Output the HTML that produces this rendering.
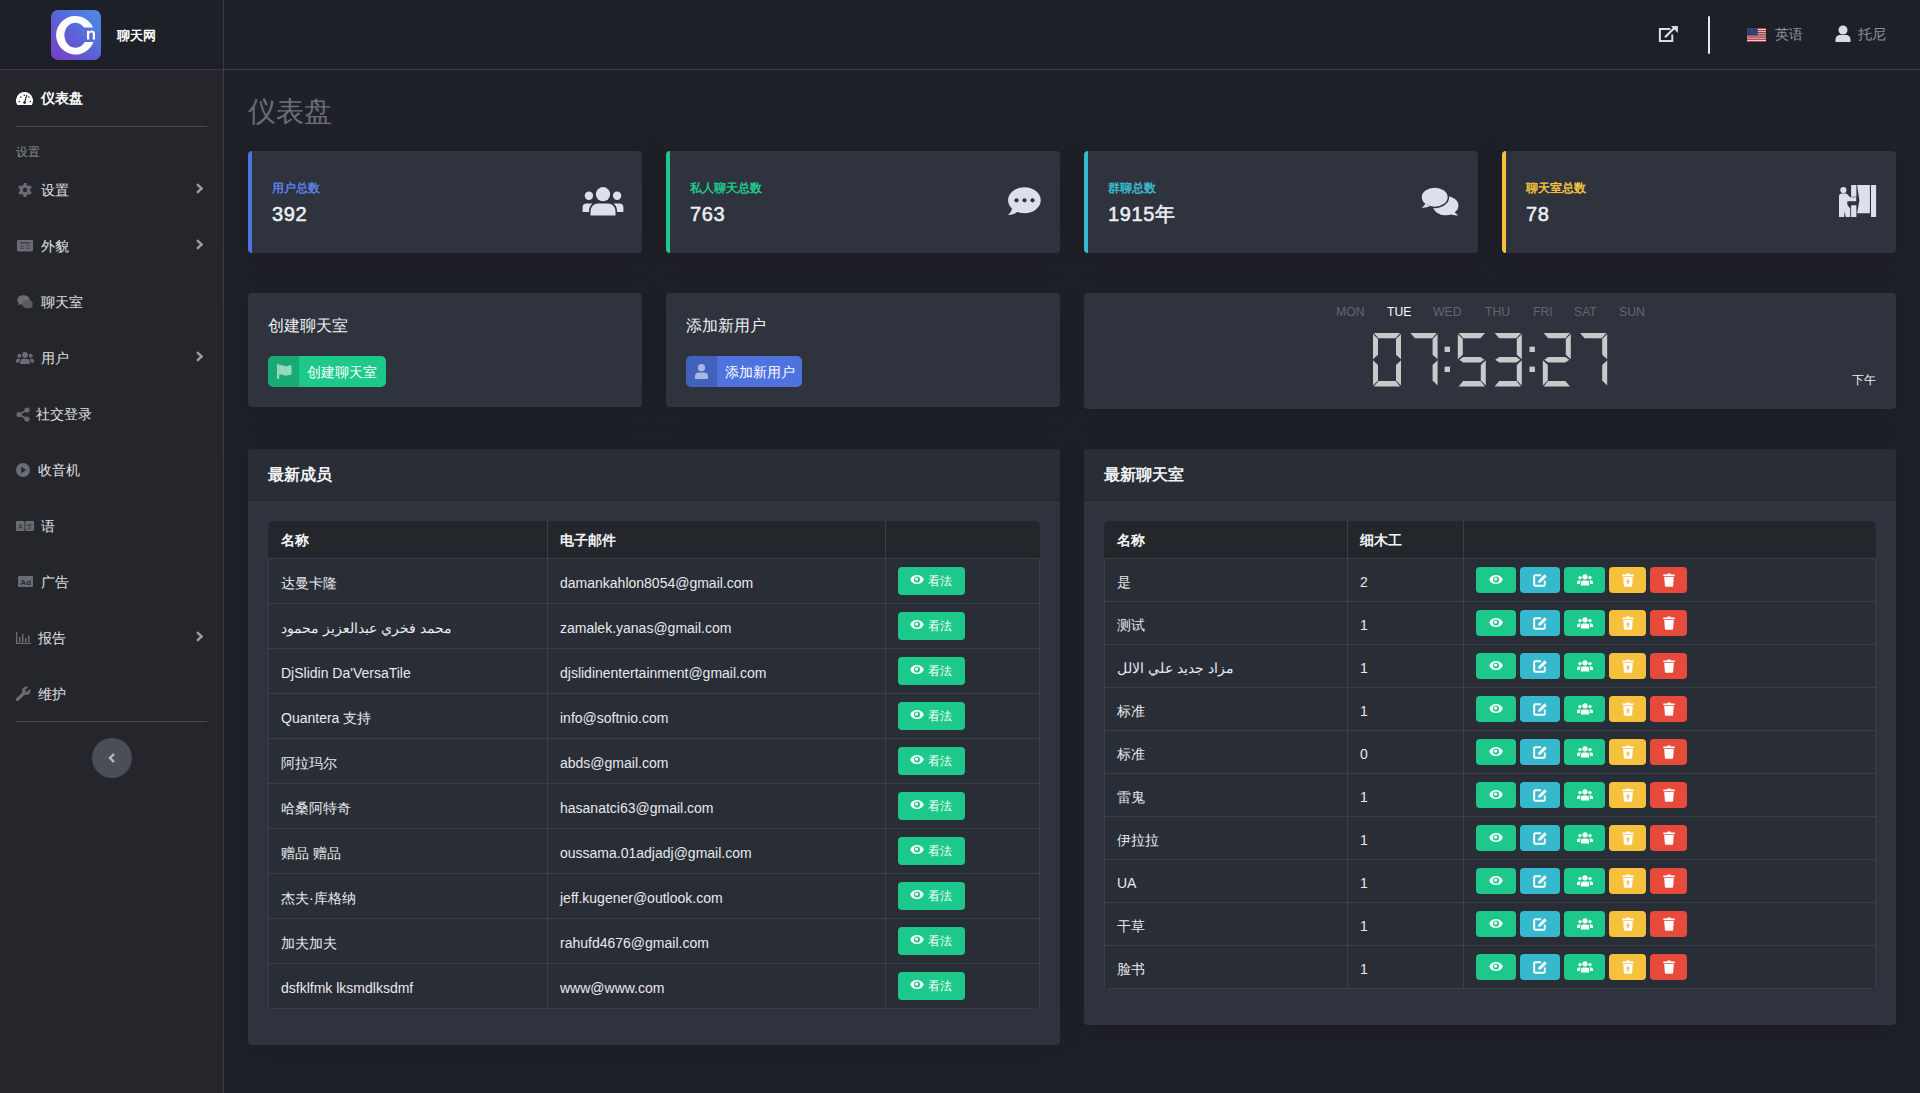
<!DOCTYPE html><html><head><meta charset="utf-8"><style>
*{box-sizing:border-box;margin:0;padding:0}
html,body{width:1920px;height:1093px;overflow:hidden}
body{background:#1f2128;font-family:"Liberation Sans",sans-serif;color:#e3e3e6;position:relative}
.abs{position:absolute}
#topbar{position:absolute;left:0;top:0;width:1920px;height:70px;background:#1e2028;border-bottom:1px solid #3b3b43}
#sidebar{position:absolute;left:0;top:70px;width:224px;height:1023px;background:#24262b;border-right:1px solid #3b3b43}
#sbtop{position:absolute;left:223px;top:0;width:1px;height:70px;background:#3b3b43}
.logo{position:absolute;left:51px;top:10px;width:50px;height:50px;border-radius:7px;background:linear-gradient(45deg,#7b3cc2 0%,#5a64d8 50%,#4a8ee8 100%);overflow:hidden}
.brand{position:absolute;left:117px;top:27.5px;font-size:12.6px;font-weight:bold;color:#fff;line-height:16px}
.nav{position:absolute;left:0;height:20px;line-height:20px;font-size:14px;color:#e2e2e4;white-space:nowrap}
.nav svg{position:absolute}
.nav .t{position:absolute;top:0}
.chev{position:absolute;left:195px}
.divider{position:absolute;left:16px;width:191px;height:1px;background:#474a52}
.card{position:absolute;background:#2e333d;border-radius:4px;box-shadow:0 .15rem 1.75rem 0 rgba(0,0,0,.15)}
.stat{height:102px;top:151px;width:394px;border-left:4px solid}
.stat .lbl{position:absolute;left:20px;top:30px;font-size:12px;font-weight:bold;line-height:14px;white-space:nowrap}
.stat .num{position:absolute;left:20px;top:51px;font-size:20px;letter-spacing:0.6px;font-weight:normal;-webkit-text-stroke:0.55px #eceef3;color:#eceef3;line-height:24px;white-space:nowrap}
.stat svg{position:absolute}
.h16{position:absolute;font-size:16px;color:#eef0f3;line-height:20px;white-space:nowrap;margin-top:1px}
.btnsplit{position:absolute;height:31px;border-radius:5px;overflow:hidden;display:flex;font-size:14px;color:#fff;line-height:31px;white-space:nowrap}
.btnsplit .ic{width:31px;height:31px;background:rgba(0,0,0,.15);position:relative}
.btnsplit .tx{padding-left:8px;position:relative;top:1px}
.panel{position:absolute;background:#2e333d;border-radius:4px;box-shadow:0 .15rem 1.75rem 0 rgba(0,0,0,.15);overflow:hidden}
.phead{position:absolute;left:0;top:0;right:0;height:52px;background:#292d35;border-bottom:1px solid #23262c}
.phead .t{position:absolute;left:20px;top:16px;font-size:16px;font-weight:bold;color:#f2f2f4;line-height:20px}
table{position:absolute;border-collapse:separate;border-spacing:0;font-size:14px;color:#e6e7ea}
.tbl{position:absolute;background:#292d36;border:1px solid #3a3d44;border-radius:5px;overflow:hidden}
.tr{position:absolute;left:0;right:0;border-bottom:1px solid #3a3d44}
.thead{background:#23262b}
.cell{position:absolute;top:0;white-space:nowrap}
.vl{position:absolute;top:0;bottom:0;width:1px;background:#3a3d44}
.vbtn{position:absolute;height:28px;width:67px;border-radius:4px;background:#1cc88a;color:#fff;font-size:12px;line-height:28px}
.ab{position:absolute;height:26px;border-radius:4px}
</style></head><body>
<div id="topbar"></div>
<div id="sidebar"></div>
<div id="sbtop"></div>
<div class="logo"><svg width="50" height="50" viewBox="0 0 50 50" style="position:absolute;left:0;top:0">
<path d="M42.1 17.5 A19.3 19.3 0 1 0 42.5 31.9 L33.69 31.9 A11 12.5 0 1 1 33.06 17.5 Z" fill="#fff"/>
<path d="M36 29.4 V20.8 H38.2 V21.8 C39 20.9 40 20.6 41 20.6 C43 20.6 44 21.8 44 23.8 V29.4 H41.8 V24.2 C41.8 23 41.3 22.4 40.3 22.4 C39 22.4 38.2 23.2 38.2 24.6 V29.4 Z" fill="#fff"/>
</svg></div>
<div class="brand">聊天网</div>
<svg class="abs" style="left:1657px;top:24px" width="23" height="20" viewBox="0 0 23 20">
<path d="M13.3 4.9 H2.9 V17.1 H15.3 V10.4" fill="none" stroke="#dcdde6" stroke-width="2"/>
<path d="M8 13.3 L17.8 3.5" stroke="#dcdde6" stroke-width="2.3"/>
<path d="M14 2 H20.9 V8.9 Z" fill="#dcdde6"/>
</svg>
<div class="abs" style="left:1708px;top:16px;width:2px;height:38px;background:#e6e6ec;border-radius:1px"></div>
<svg class="abs" style="left:1747px;top:28px" width="19" height="14" viewBox="0 0 19 14"><rect x="0" y="0.00" width="19" height="1.08" fill="#c8323c"/><rect x="0" y="1.08" width="19" height="1.08" fill="#eee"/><rect x="0" y="2.15" width="19" height="1.08" fill="#c8323c"/><rect x="0" y="3.23" width="19" height="1.08" fill="#eee"/><rect x="0" y="4.31" width="19" height="1.08" fill="#c8323c"/><rect x="0" y="5.38" width="19" height="1.08" fill="#eee"/><rect x="0" y="6.46" width="19" height="1.08" fill="#c8323c"/><rect x="0" y="7.54" width="19" height="1.08" fill="#eee"/><rect x="0" y="8.62" width="19" height="1.08" fill="#c8323c"/><rect x="0" y="9.69" width="19" height="1.08" fill="#eee"/><rect x="0" y="10.77" width="19" height="1.08" fill="#c8323c"/><rect x="0" y="11.85" width="19" height="1.08" fill="#eee"/><rect x="0" y="12.92" width="19" height="1.08" fill="#c8323c"/><rect x="0" y="14.00" width="19" height="1.08" fill="#eee"/><rect x="0" y="0" width="10.8" height="7.5" fill="#3b3c72"/></svg>
<div class="abs" style="left:1775px;top:26px;font-size:14px;line-height:17px;color:#8d909b">英语</div>
<svg class="abs" style="left:1835px;top:25px" width="16" height="17" viewBox="0 0 16 17">
<circle cx="8" cy="5" r="4.5" fill="#d9dbe6"/>
<path d="M0.5 17 V14.5 A4.5 4.5 0 0 1 5 10 H11 A4.5 4.5 0 0 1 15.5 14.5 V17 Z" fill="#d9dbe6"/>
</svg>
<div class="abs" style="left:1858px;top:26px;font-size:14px;line-height:17px;color:#8d909b">托尼</div>
<div class="nav" style="top:88px;width:223px"><svg style="left:16px;top:4px" width="17" height="14" viewBox="0 0 17 14">
<path d="M1.3 13 A8.5 8.5 0 1 1 15.7 13 Z" fill="#fff"/>
<circle cx="3.3" cy="9.5" r="0.8" fill="#23262c"/><circle cx="4.8" cy="5" r="0.8" fill="#23262c"/><circle cx="12.8" cy="5" r="0.8" fill="#23262c"/><circle cx="14.3" cy="9.5" r="0.8" fill="#23262c"/><circle cx="8.25" cy="3.3" r="0.8" fill="#23262c"/>
<path d="M8.6 10.3 L10.8 3" stroke="#23262c" stroke-width="1.1"/><circle cx="8.6" cy="10.6" r="1.4" fill="#23262c"/>
</svg><span class="t" style="left:41px;color:#ffffff;font-weight:bold">仪表盘</span></div>
<div class="divider" style="top:126px"></div>
<div class="abs" style="left:16px;top:145px;font-size:12px;line-height:14px;color:#8a8b90">设置</div>
<div class="nav" style="top:180px;width:223px"><svg style="left:18px;top:3px" width="14" height="14" viewBox="0 0 14 14">
<g fill="#6a6c73"><circle cx="7" cy="7" r="5.2"/>
<rect x="5.4" y="0" width="3.2" height="14" rx="0.8"/>
<rect x="5.4" y="0" width="3.2" height="14" rx="0.8" transform="rotate(60 7 7)"/>
<rect x="5.4" y="0" width="3.2" height="14" rx="0.8" transform="rotate(120 7 7)"/></g>
<circle cx="7" cy="7" r="2.2" fill="#23262c"/></svg><span class="t" style="left:41px;color:#e0e0e3;font-weight:normal">设置</span><svg class="chev" style="top:3px" width="9" height="11" viewBox="0 0 9 11"><path d="M2 1.2 L6.6 5.5 L2 9.8" fill="none" stroke="#9b9da4" stroke-width="2.4"/></svg></div>
<div class="nav" style="top:236px;width:223px"><svg style="left:17px;top:4px" width="16" height="12" viewBox="0 0 16 12">
<rect x="0" y="0" width="16" height="11.5" rx="1.2" fill="#6a6c73"/>
<rect x="3" y="2.2" width="10" height="1.4" fill="#3a3c42"/>
<rect x="3" y="5.4" width="4.2" height="1.1" fill="#4a4c52"/><rect x="8.8" y="5.4" width="4.2" height="1.1" fill="#4a4c52"/>
<rect x="3" y="7.8" width="4.2" height="1.1" fill="#4a4c52"/><rect x="8.8" y="7.8" width="4.2" height="1.1" fill="#4a4c52"/>
</svg><span class="t" style="left:41px;color:#e0e0e3;font-weight:normal">外貌</span><svg class="chev" style="top:3px" width="9" height="11" viewBox="0 0 9 11"><path d="M2 1.2 L6.6 5.5 L2 9.8" fill="none" stroke="#9b9da4" stroke-width="2.4"/></svg></div>
<div class="nav" style="top:292px;width:223px"><svg style="left:17px;top:3px" width="16" height="14" viewBox="0 0 16 14">
<ellipse cx="6.5" cy="5" rx="6.3" ry="4.8" fill="#6a6c73"/><path d="M0.5 10.5 L2.5 7 L4 8.8 Z" fill="#6a6c73"/>
<ellipse cx="10.5" cy="9" rx="5.3" ry="4.3" fill="#5a5c62"/><path d="M15.8 13.5 L13.5 11 L12 12.6 Z" fill="#5a5c62"/>
</svg><span class="t" style="left:41px;color:#e0e0e3;font-weight:normal">聊天室</span></div>
<div class="nav" style="top:348px;width:223px"><svg style="left:16px;top:4px" width="18" height="12" viewBox="0 0 18 12">
<g fill="#6a6c73"><circle cx="9" cy="3" r="3"/><circle cx="3.3" cy="3.8" r="2"/><circle cx="14.7" cy="3.8" r="2"/>
<path d="M4.2 12 V10 A3.3 3.3 0 0 1 7.5 6.8 H10.5 A3.3 3.3 0 0 1 13.8 10 V12 Z"/>
<path d="M0 10.5 V8.8 A2 2 0 0 1 2 6.8 H4.5 A4 4 0 0 0 3.4 9 V10.5 Z"/>
<path d="M18 10.5 V8.8 A2 2 0 0 0 16 6.8 H13.5 A4 4 0 0 1 14.6 9 V10.5 Z"/></g></svg><span class="t" style="left:41px;color:#e0e0e3;font-weight:normal">用户</span><svg class="chev" style="top:3px" width="9" height="11" viewBox="0 0 9 11"><path d="M2 1.2 L6.6 5.5 L2 9.8" fill="none" stroke="#9b9da4" stroke-width="2.4"/></svg></div>
<div class="nav" style="top:404px;width:223px"><svg style="left:16px;top:3px" width="14" height="15" viewBox="0 0 14 15">
<g fill="#6a6c73"><circle cx="11" cy="3" r="2.6"/><circle cx="3" cy="7.5" r="2.6"/><circle cx="11" cy="12" r="2.6"/></g>
<path d="M11 3 L3 7.5 L11 12" fill="none" stroke="#6a6c73" stroke-width="1.6"/></svg><span class="t" style="left:36px;color:#e0e0e3;font-weight:normal">社交登录</span></div>
<div class="nav" style="top:460px;width:223px"><svg style="left:16px;top:3px" width="14" height="14" viewBox="0 0 14 14">
<circle cx="7" cy="7" r="7" fill="#6a6c73"/><path d="M5.2 3.8 L10 7 L5.2 10.2 Z" fill="#23262c"/></svg><span class="t" style="left:38px;color:#e0e0e3;font-weight:normal">收音机</span></div>
<div class="nav" style="top:516px;width:223px"><svg style="left:16px;top:5px" width="18" height="10" viewBox="0 0 18 10">
<rect x="0" y="0" width="8.6" height="10" rx="0.8" fill="#6a6c73"/><rect x="9.4" y="0" width="8.6" height="10" rx="0.8" fill="#6a6c73"/>
<text x="4.3" y="8" font-size="7" text-anchor="middle" fill="#2a2c31" font-family="Liberation Sans">A</text>
<text x="13.7" y="8" font-size="7" text-anchor="middle" fill="#2a2c31" font-family="Liberation Sans">文</text></svg><span class="t" style="left:41px;color:#e0e0e3;font-weight:normal">语</span></div>
<div class="nav" style="top:572px;width:223px"><svg style="left:18px;top:4px" width="15" height="11" viewBox="0 0 15 11">
<rect x="0" y="0" width="15" height="11" rx="1" fill="#6a6c73"/>
<text x="7.5" y="8.5" font-size="8" font-weight="bold" text-anchor="middle" fill="#2a2c31" font-family="Liberation Sans">Ad</text></svg><span class="t" style="left:41px;color:#e0e0e3;font-weight:normal">广告</span></div>
<div class="nav" style="top:628px;width:223px"><svg style="left:16px;top:4px" width="15" height="12" viewBox="0 0 15 12">
<g fill="#6a6c73"><rect x="0" y="0" width="1.3" height="12"/><rect x="0" y="10.7" width="15" height="1.3"/>
<rect x="3" y="5" width="1.5" height="5"/><rect x="6" y="2" width="1.5" height="8"/><rect x="9" y="6" width="1.5" height="4"/><rect x="12" y="3.5" width="1.5" height="6.5"/></g></svg><span class="t" style="left:38px;color:#e0e0e3;font-weight:normal">报告</span><svg class="chev" style="top:3px" width="9" height="11" viewBox="0 0 9 11"><path d="M2 1.2 L6.6 5.5 L2 9.8" fill="none" stroke="#9b9da4" stroke-width="2.4"/></svg></div>
<div class="nav" style="top:684px;width:223px"><svg style="left:16px;top:2px" width="15" height="15" viewBox="0 0 15 15">
<path d="M1.5 13.5 L8 7" stroke="#6a6c73" stroke-width="3.2" stroke-linecap="round"/>
<circle cx="10.3" cy="4.7" r="4.3" fill="#6a6c73"/><path d="M10.5 4.5 L13 2" stroke="#23262c" stroke-width="2.6" stroke-linecap="round"/></svg><span class="t" style="left:38px;color:#e0e0e3;font-weight:normal">维护</span></div>
<div class="divider" style="top:721px"></div>
<div class="abs" style="left:92px;top:738px;width:40px;height:40px;border-radius:50%;background:#4b4e55">
<svg class="abs" style="left:16px;top:15px" width="8" height="10" viewBox="0 0 8 10"><path d="M6 1 L2 5 L6 9" fill="none" stroke="#b9bbc2" stroke-width="2.4"/></svg></div>
<div class="abs" style="left:248px;top:95px;font-size:28px;line-height:34px;color:#6d6c77">仪表盘</div>
<div class="card stat" style="left:248px;border-left-color:#4e73df"><div class="lbl" style="color:#5b7fe5">用户总数</div><div class="num">392</div><svg style="left:329.5px;top:36px" width="42" height="30" viewBox="0 0 42 30">
<g fill="#dddfeb"><circle cx="21" cy="7.2" r="7.1"/><circle cx="6.9" cy="8.7" r="4.2"/><circle cx="35.1" cy="8.7" r="4.2"/>
<path d="M8.5 28.6 V24 A7.5 7.5 0 0 1 16 16.5 H26 A7.5 7.5 0 0 1 33.5 24 V28.6 Z"/>
<path d="M0.6 25 V20.5 A4 4 0 0 1 4.6 16.5 H10.5 A9.5 9.5 0 0 0 7 23.5 V25 Z"/>
<path d="M41.4 25 V20.5 A4 4 0 0 0 37.4 16.5 H31.5 A9.5 9.5 0 0 1 35 23.5 V25 Z"/></g></svg></div>
<div class="card stat" style="left:666px;border-left-color:#1cc88a"><div class="lbl" style="color:#1ec98c">私人聊天总数</div><div class="num">763</div><svg style="left:337.5px;top:35.7px" width="34" height="30" viewBox="0 0 34 30">
<ellipse cx="16.4" cy="13.2" rx="16.3" ry="13" fill="#dddfeb"/>
<path d="M4.2 20.5 C3.8 24 2 26.3 0 28 C3.5 28 6.8 27 9.5 24.8 Z" fill="#dddfeb"/>
<circle cx="8.5" cy="13.3" r="2.1" fill="#2e333d"/><circle cx="16.5" cy="13.3" r="2.1" fill="#2e333d"/><circle cx="24.5" cy="13.3" r="2.1" fill="#2e333d"/></svg></div>
<div class="card stat" style="left:1084px;border-left-color:#36b9cc"><div class="lbl" style="color:#39bccd">群聊总数</div><div class="num">1915年</div><svg style="left:333px;top:35.5px" width="40" height="30" viewBox="0 0 40 30">
<ellipse cx="24.6" cy="18.6" rx="12.8" ry="9.6" fill="#dddfeb"/>
<path d="M33 24 C34 26 35.5 27.4 37.5 28.3 C34 28.6 31 28 28.5 26.5 Z" fill="#dddfeb"/>
<ellipse cx="13.7" cy="10.2" rx="13.7" ry="10.2" fill="#dddfeb" stroke="#2e333d" stroke-width="1.5"/>
<path d="M4.2 16.5 C3.6 18.6 2 20 0.2 20.6 C3.5 21 6.5 20.3 8.8 19 Z" fill="#dddfeb"/>
</svg></div>
<div class="card stat" style="left:1502px;border-left-color:#f6c23e"><div class="lbl" style="color:#f6c23e">聊天室总数</div><div class="num">78</div><svg style="left:333.4px;top:33.8px" width="38" height="33" viewBox="0 0 38 33">
<g fill="#dddfeb"><circle cx="4.4" cy="5.1" r="3.1"/>
<rect x="12.1" y="0" width="5.3" height="11.7" rx="0.5"/><rect x="12.1" y="20.2" width="5.3" height="11.9" rx="0.5"/>
<path d="M18.1 0 L20.4 15.6 L18.1 28.2 H30.9 V0 Z"/>
<rect x="32" y="0" width="5.1" height="32.1" rx="0.5"/>
<path d="M0 32.1 V11.6 A3 3 0 0 1 3 8.6 H7.5 L11.2 12.2 H17.2 V16.3 H8.3 V19.8 L11.2 23.5 V32.1 H6.8 L5.6 26.5 L5.2 32.1 Z"/></g></svg></div>
<div class="card" style="left:248px;top:293px;width:394px;height:114px"></div>
<div class="h16" style="left:268px;top:315px">创建聊天室</div>
<div class="btnsplit" style="left:268px;top:356px;width:118px;background:#1cc88a"><div class="ic">
<svg class="abs" style="left:9px;top:8px" width="15" height="15" viewBox="0 0 15 15"><rect x="0" y="0" width="2.2" height="15" rx="1" fill="rgba(255,255,255,.55)"/><path d="M2.2 1.5 C5 0 7.5 3 10 2 C11.5 1.5 13 1 14.5 1.2 V11 C13 10.6 11.5 11 10 11.6 C7.5 12.6 5 9.5 2.2 11 Z" fill="rgba(255,255,255,.55)"/></svg>
</div><div class="tx">创建聊天室</div></div>
<div class="card" style="left:666px;top:293px;width:394px;height:114px"></div>
<div class="h16" style="left:686px;top:315px">添加新用户</div>
<div class="btnsplit" style="left:686px;top:356px;width:116px;background:#4e73df"><div class="ic">
<svg class="abs" style="left:9px;top:8px" width="13" height="15" viewBox="0 0 13 15"><circle cx="6.5" cy="3.7" r="3.6" fill="rgba(255,255,255,.55)"/><path d="M0 15 V12.5 A4 4 0 0 1 4 8.5 H9 A4 4 0 0 1 13 12.5 V15 Z" fill="rgba(255,255,255,.55)"/></svg>
</div><div class="tx">添加新用户</div></div>
<div class="card" style="left:1084px;top:293px;width:812px;height:116px"></div>
<div class="abs" style="left:1336px;top:305px;font-size:12.2px;line-height:14px;color:#62666f">MON</div>
<div class="abs" style="left:1387px;top:305px;font-size:12.2px;line-height:14px;color:#ffffff">TUE</div>
<div class="abs" style="left:1433px;top:305px;font-size:12.2px;line-height:14px;color:#62666f">WED</div>
<div class="abs" style="left:1485px;top:305px;font-size:12.2px;line-height:14px;color:#62666f">THU</div>
<div class="abs" style="left:1533px;top:305px;font-size:12.2px;line-height:14px;color:#62666f">FRI</div>
<div class="abs" style="left:1574px;top:305px;font-size:12.2px;line-height:14px;color:#62666f">SAT</div>
<div class="abs" style="left:1619px;top:305px;font-size:12.2px;line-height:14px;color:#62666f">SUN</div>
<div class="abs" style="left:1852px;top:373px;font-size:12px;line-height:14px;color:#f0f0f0">下午</div>
<svg class="abs" style="left:1370px;top:330px" width="245" height="60" viewBox="0 0 245 60"><g fill="#c9c9c9" transform="translate(0,2.9)"><g transform="translate(3.00,0)"><polygon points="0.8,0 27.2,0 22.6,5.4 5.4,5.4"/><polygon points="28,1.2 28,26.4 23.0,21.8 23.0,6.2"/><polygon points="28,27.4 28,52.6 23.0,47.6 23.0,32.2"/><polygon points="0.8,53.6 27.2,53.6 22.6,48.2 5.4,48.2"/><polygon points="0,27.4 0,52.6 5.0,47.6 5.0,32.2"/><polygon points="0,1.2 0,26.4 5.0,21.8 5.0,6.2"/></g><g transform="translate(39.60,0)"><polygon points="0.8,0 27.2,0 22.6,5.4 5.4,5.4"/><polygon points="28,1.2 28,26.4 23.0,21.8 23.0,6.2"/><polygon points="28,27.4 28,52.6 23.0,47.6 23.0,32.2"/></g><g transform="translate(87.80,0)"><polygon points="0.8,0 27.2,0 22.6,5.4 5.4,5.4"/><polygon points="0,1.2 0,26.4 5.0,21.8 5.0,6.2"/><polygon points="1.5,26.9 5.4,24.2 22.6,24.2 26.5,26.9 22.6,29.6 5.4,29.6"/><polygon points="28,27.4 28,52.6 23.0,47.6 23.0,32.2"/><polygon points="0.8,53.6 27.2,53.6 22.6,48.2 5.4,48.2"/></g><g transform="translate(123.80,0)"><polygon points="0.8,0 27.2,0 22.6,5.4 5.4,5.4"/><polygon points="28,1.2 28,26.4 23.0,21.8 23.0,6.2"/><polygon points="1.5,26.9 5.4,24.2 22.6,24.2 26.5,26.9 22.6,29.6 5.4,29.6"/><polygon points="28,27.4 28,52.6 23.0,47.6 23.0,32.2"/><polygon points="0.8,53.6 27.2,53.6 22.6,48.2 5.4,48.2"/></g><g transform="translate(172.80,0)"><polygon points="0.8,0 27.2,0 22.6,5.4 5.4,5.4"/><polygon points="28,1.2 28,26.4 23.0,21.8 23.0,6.2"/><polygon points="1.5,26.9 5.4,24.2 22.6,24.2 26.5,26.9 22.6,29.6 5.4,29.6"/><polygon points="0,27.4 0,52.6 5.0,47.6 5.0,32.2"/><polygon points="0.8,53.6 27.2,53.6 22.6,48.2 5.4,48.2"/></g><g transform="translate(209.20,0)"><polygon points="0.8,0 27.2,0 22.6,5.4 5.4,5.4"/><polygon points="28,1.2 28,26.4 23.0,21.8 23.0,6.2"/><polygon points="28,27.4 28,52.6 23.0,47.6 23.0,32.2"/></g><rect x="74.60" y="13.8" width="5.4" height="5.3"/><rect x="74.60" y="33.7" width="5.4" height="5.4"/><rect x="159.50" y="13.8" width="5.4" height="5.3"/><rect x="159.50" y="33.7" width="5.4" height="5.4"/></g></svg>
<div class="panel" style="left:248px;top:449px;width:812px;height:596px"><div class="phead"><div class="t">最新成员</div></div></div>
<div class="panel" style="left:1084px;top:449px;width:812px;height:576px"><div class="phead"><div class="t">最新聊天室</div></div></div>
<div class="abs" style="left:268px;top:521px;width:772px;height:488px"><div class="abs" style="left:0;top:0;width:772px;height:37px;background:#23262b;border-radius:5px 5px 0 0"></div><div class="abs" style="left:0;top:37px;width:772px;height:451px;background:#292d36;border-left:1px solid #3b3e45;border-right:1px solid #3b3e45;border-radius:0 0 4px 4px"></div><div class="abs" style="left:0px;top:37px;width:772px;height:1px;background:#3b3e45"></div><div class="abs" style="left:0px;top:82px;width:772px;height:1px;background:#3b3e45"></div><div class="abs" style="left:0px;top:127px;width:772px;height:1px;background:#3b3e45"></div><div class="abs" style="left:0px;top:172px;width:772px;height:1px;background:#3b3e45"></div><div class="abs" style="left:0px;top:217px;width:772px;height:1px;background:#3b3e45"></div><div class="abs" style="left:0px;top:262px;width:772px;height:1px;background:#3b3e45"></div><div class="abs" style="left:0px;top:307px;width:772px;height:1px;background:#3b3e45"></div><div class="abs" style="left:0px;top:352px;width:772px;height:1px;background:#3b3e45"></div><div class="abs" style="left:0px;top:397px;width:772px;height:1px;background:#3b3e45"></div><div class="abs" style="left:0px;top:442px;width:772px;height:1px;background:#3b3e45"></div><div class="abs" style="left:4px;top:487px;width:764px;height:1px;background:#3b3e45"></div><div class="abs" style="left:279px;top:0;width:1px;height:488px;background:#3b3e45"></div><div class="abs" style="left:617px;top:0;width:1px;height:488px;background:#3b3e45"></div><div class="abs" style="left:13px;top:11px;font-size:14px;font-weight:bold;line-height:16px;color:#f4f4f6;white-space:nowrap">名称</div><div class="abs" style="left:292px;top:11px;font-size:14px;font-weight:bold;line-height:16px;color:#f4f4f6;white-space:nowrap">电子邮件</div><div class="abs" style="left:13px;top:54px;font-size:14px;line-height:16px;color:#e8e9ec;white-space:nowrap">达曼卡隆</div><div class="abs" style="left:292px;top:54px;font-size:14px;line-height:16px;color:#e8e9ec;white-space:nowrap">damankahlon8054@gmail.com</div><div class="vbtn" style="left:630px;top:46px"><svg class="abs" style="left:12px;top:7px" width="14" height="11" viewBox="0 0 14 11"><path d="M0.2 5.5 C2.2 -0.6 11.8 -0.6 13.8 5.5 C11.8 11.6 2.2 11.6 0.2 5.5 Z" fill="#fff"/><circle cx="7" cy="5.5" r="3.1" fill="#1cc88a"/><circle cx="6.6" cy="5.1" r="1.7" fill="#fff"/></svg><span class="abs" style="left:30px;top:7px;line-height:14px">看法</span></div><div class="abs" style="left:13px;top:99px;font-size:14px;line-height:16px;color:#e8e9ec;white-space:nowrap">محمد فخري عبدالعزيز محمود</div><div class="abs" style="left:292px;top:99px;font-size:14px;line-height:16px;color:#e8e9ec;white-space:nowrap">zamalek.yanas@gmail.com</div><div class="vbtn" style="left:630px;top:91px"><svg class="abs" style="left:12px;top:7px" width="14" height="11" viewBox="0 0 14 11"><path d="M0.2 5.5 C2.2 -0.6 11.8 -0.6 13.8 5.5 C11.8 11.6 2.2 11.6 0.2 5.5 Z" fill="#fff"/><circle cx="7" cy="5.5" r="3.1" fill="#1cc88a"/><circle cx="6.6" cy="5.1" r="1.7" fill="#fff"/></svg><span class="abs" style="left:30px;top:7px;line-height:14px">看法</span></div><div class="abs" style="left:13px;top:144px;font-size:14px;line-height:16px;color:#e8e9ec;white-space:nowrap">DjSlidin Da'VersaTile</div><div class="abs" style="left:292px;top:144px;font-size:14px;line-height:16px;color:#e8e9ec;white-space:nowrap">djslidinentertainment@gmail.com</div><div class="vbtn" style="left:630px;top:136px"><svg class="abs" style="left:12px;top:7px" width="14" height="11" viewBox="0 0 14 11"><path d="M0.2 5.5 C2.2 -0.6 11.8 -0.6 13.8 5.5 C11.8 11.6 2.2 11.6 0.2 5.5 Z" fill="#fff"/><circle cx="7" cy="5.5" r="3.1" fill="#1cc88a"/><circle cx="6.6" cy="5.1" r="1.7" fill="#fff"/></svg><span class="abs" style="left:30px;top:7px;line-height:14px">看法</span></div><div class="abs" style="left:13px;top:189px;font-size:14px;line-height:16px;color:#e8e9ec;white-space:nowrap">Quantera 支持</div><div class="abs" style="left:292px;top:189px;font-size:14px;line-height:16px;color:#e8e9ec;white-space:nowrap">info@softnio.com</div><div class="vbtn" style="left:630px;top:181px"><svg class="abs" style="left:12px;top:7px" width="14" height="11" viewBox="0 0 14 11"><path d="M0.2 5.5 C2.2 -0.6 11.8 -0.6 13.8 5.5 C11.8 11.6 2.2 11.6 0.2 5.5 Z" fill="#fff"/><circle cx="7" cy="5.5" r="3.1" fill="#1cc88a"/><circle cx="6.6" cy="5.1" r="1.7" fill="#fff"/></svg><span class="abs" style="left:30px;top:7px;line-height:14px">看法</span></div><div class="abs" style="left:13px;top:234px;font-size:14px;line-height:16px;color:#e8e9ec;white-space:nowrap">阿拉玛尔</div><div class="abs" style="left:292px;top:234px;font-size:14px;line-height:16px;color:#e8e9ec;white-space:nowrap">abds@gmail.com</div><div class="vbtn" style="left:630px;top:226px"><svg class="abs" style="left:12px;top:7px" width="14" height="11" viewBox="0 0 14 11"><path d="M0.2 5.5 C2.2 -0.6 11.8 -0.6 13.8 5.5 C11.8 11.6 2.2 11.6 0.2 5.5 Z" fill="#fff"/><circle cx="7" cy="5.5" r="3.1" fill="#1cc88a"/><circle cx="6.6" cy="5.1" r="1.7" fill="#fff"/></svg><span class="abs" style="left:30px;top:7px;line-height:14px">看法</span></div><div class="abs" style="left:13px;top:279px;font-size:14px;line-height:16px;color:#e8e9ec;white-space:nowrap">哈桑阿特奇</div><div class="abs" style="left:292px;top:279px;font-size:14px;line-height:16px;color:#e8e9ec;white-space:nowrap">hasanatci63@gmail.com</div><div class="vbtn" style="left:630px;top:271px"><svg class="abs" style="left:12px;top:7px" width="14" height="11" viewBox="0 0 14 11"><path d="M0.2 5.5 C2.2 -0.6 11.8 -0.6 13.8 5.5 C11.8 11.6 2.2 11.6 0.2 5.5 Z" fill="#fff"/><circle cx="7" cy="5.5" r="3.1" fill="#1cc88a"/><circle cx="6.6" cy="5.1" r="1.7" fill="#fff"/></svg><span class="abs" style="left:30px;top:7px;line-height:14px">看法</span></div><div class="abs" style="left:13px;top:324px;font-size:14px;line-height:16px;color:#e8e9ec;white-space:nowrap">赠品 赠品</div><div class="abs" style="left:292px;top:324px;font-size:14px;line-height:16px;color:#e8e9ec;white-space:nowrap">oussama.01adjadj@gmail.com</div><div class="vbtn" style="left:630px;top:316px"><svg class="abs" style="left:12px;top:7px" width="14" height="11" viewBox="0 0 14 11"><path d="M0.2 5.5 C2.2 -0.6 11.8 -0.6 13.8 5.5 C11.8 11.6 2.2 11.6 0.2 5.5 Z" fill="#fff"/><circle cx="7" cy="5.5" r="3.1" fill="#1cc88a"/><circle cx="6.6" cy="5.1" r="1.7" fill="#fff"/></svg><span class="abs" style="left:30px;top:7px;line-height:14px">看法</span></div><div class="abs" style="left:13px;top:369px;font-size:14px;line-height:16px;color:#e8e9ec;white-space:nowrap">杰夫·库格纳</div><div class="abs" style="left:292px;top:369px;font-size:14px;line-height:16px;color:#e8e9ec;white-space:nowrap">jeff.kugener@outlook.com</div><div class="vbtn" style="left:630px;top:361px"><svg class="abs" style="left:12px;top:7px" width="14" height="11" viewBox="0 0 14 11"><path d="M0.2 5.5 C2.2 -0.6 11.8 -0.6 13.8 5.5 C11.8 11.6 2.2 11.6 0.2 5.5 Z" fill="#fff"/><circle cx="7" cy="5.5" r="3.1" fill="#1cc88a"/><circle cx="6.6" cy="5.1" r="1.7" fill="#fff"/></svg><span class="abs" style="left:30px;top:7px;line-height:14px">看法</span></div><div class="abs" style="left:13px;top:414px;font-size:14px;line-height:16px;color:#e8e9ec;white-space:nowrap">加夫加夫</div><div class="abs" style="left:292px;top:414px;font-size:14px;line-height:16px;color:#e8e9ec;white-space:nowrap">rahufd4676@gmail.com</div><div class="vbtn" style="left:630px;top:406px"><svg class="abs" style="left:12px;top:7px" width="14" height="11" viewBox="0 0 14 11"><path d="M0.2 5.5 C2.2 -0.6 11.8 -0.6 13.8 5.5 C11.8 11.6 2.2 11.6 0.2 5.5 Z" fill="#fff"/><circle cx="7" cy="5.5" r="3.1" fill="#1cc88a"/><circle cx="6.6" cy="5.1" r="1.7" fill="#fff"/></svg><span class="abs" style="left:30px;top:7px;line-height:14px">看法</span></div><div class="abs" style="left:13px;top:459px;font-size:14px;line-height:16px;color:#e8e9ec;white-space:nowrap">dsfklfmk lksmdlksdmf</div><div class="abs" style="left:292px;top:459px;font-size:14px;line-height:16px;color:#e8e9ec;white-space:nowrap">www@www.com</div><div class="vbtn" style="left:630px;top:451px"><svg class="abs" style="left:12px;top:7px" width="14" height="11" viewBox="0 0 14 11"><path d="M0.2 5.5 C2.2 -0.6 11.8 -0.6 13.8 5.5 C11.8 11.6 2.2 11.6 0.2 5.5 Z" fill="#fff"/><circle cx="7" cy="5.5" r="3.1" fill="#1cc88a"/><circle cx="6.6" cy="5.1" r="1.7" fill="#fff"/></svg><span class="abs" style="left:30px;top:7px;line-height:14px">看法</span></div></div>
<div class="abs" style="left:1104px;top:521px;width:772px;height:468px"><div class="abs" style="left:0;top:0;width:772px;height:37px;background:#23262b;border-radius:5px 5px 0 0"></div><div class="abs" style="left:0;top:37px;width:772px;height:431px;background:#292d36;border-left:1px solid #3b3e45;border-right:1px solid #3b3e45;border-radius:0 0 4px 4px"></div><div class="abs" style="left:0px;top:37px;width:772px;height:1px;background:#3b3e45"></div><div class="abs" style="left:0px;top:80px;width:772px;height:1px;background:#3b3e45"></div><div class="abs" style="left:0px;top:123px;width:772px;height:1px;background:#3b3e45"></div><div class="abs" style="left:0px;top:166px;width:772px;height:1px;background:#3b3e45"></div><div class="abs" style="left:0px;top:209px;width:772px;height:1px;background:#3b3e45"></div><div class="abs" style="left:0px;top:252px;width:772px;height:1px;background:#3b3e45"></div><div class="abs" style="left:0px;top:295px;width:772px;height:1px;background:#3b3e45"></div><div class="abs" style="left:0px;top:338px;width:772px;height:1px;background:#3b3e45"></div><div class="abs" style="left:0px;top:381px;width:772px;height:1px;background:#3b3e45"></div><div class="abs" style="left:0px;top:424px;width:772px;height:1px;background:#3b3e45"></div><div class="abs" style="left:4px;top:467px;width:764px;height:1px;background:#3b3e45"></div><div class="abs" style="left:243px;top:0;width:1px;height:468px;background:#3b3e45"></div><div class="abs" style="left:359px;top:0;width:1px;height:468px;background:#3b3e45"></div><div class="abs" style="left:13px;top:11px;font-size:14px;font-weight:bold;line-height:16px;color:#f4f4f6;white-space:nowrap">名称</div><div class="abs" style="left:256px;top:11px;font-size:14px;font-weight:bold;line-height:16px;color:#f4f4f6;white-space:nowrap">细木工</div><div class="abs" style="left:13px;top:53px;font-size:14px;line-height:16px;color:#e8e9ec;white-space:nowrap">是</div><div class="abs" style="left:256px;top:53px;font-size:14px;line-height:16px;color:#e8e9ec;white-space:nowrap">2</div><div class="ab" style="left:372px;top:46px;width:40px;background:#1cc88a"><svg class="abs" style="left:13px;top:7px" width="14" height="11" viewBox="0 0 14 11"><path d="M0.2 5.5 C2.2 -0.6 11.8 -0.6 13.8 5.5 C11.8 11.6 2.2 11.6 0.2 5.5 Z" fill="#fff"/><circle cx="7" cy="5.5" r="3.1" fill="#1cc88a"/><circle cx="6.6" cy="5.1" r="1.7" fill="#fff"/></svg></div><div class="ab" style="left:416px;top:46px;width:40px;background:#36b9cc"><svg class="abs" style="left:13px;top:6px" width="15" height="14" viewBox="0 0 15 14">
<path d="M8 2.2 H2.2 A1 1 0 0 0 1.2 3.2 V11.8 A1 1 0 0 0 2.2 12.8 H10.8 A1 1 0 0 0 11.8 11.8 V7.5" fill="none" stroke="#fff" stroke-width="1.9"/>
<path d="M5 9.8 L5.4 7.4 L11.6 1.2 L13.8 3.4 L7.6 9.6 Z" fill="#fff"/></svg></div><div class="ab" style="left:460px;top:46px;width:41px;background:#1cc88a"><svg class="abs" style="left:13px;top:7px" width="16" height="12" viewBox="0 0 16 12">
<g fill="#fff"><circle cx="8" cy="2.8" r="2.6"/><circle cx="3" cy="3.6" r="1.7"/><circle cx="13" cy="3.6" r="1.7"/>
<path d="M3.8 11.5 V9.3 A2.8 2.8 0 0 1 6.6 6.5 H9.4 A2.8 2.8 0 0 1 12.2 9.3 V11.5 Z"/>
<path d="M0 10 V8.2 A1.8 1.8 0 0 1 1.8 6.4 H4 A3.5 3.5 0 0 0 3 8.8 V10 Z"/><path d="M16 10 V8.2 A1.8 1.8 0 0 0 14.2 6.4 H12 A3.5 3.5 0 0 1 13 8.8 V10 Z"/></g></svg></div><div class="ab" style="left:505px;top:46px;width:37px;background:#f6c23e"><svg class="abs" style="left:13px;top:6px" width="12" height="14" viewBox="0 0 12 14">
<path d="M0.3 1.6 H4 L4.6 0.4 H7.4 L8 1.6 H11.7 V3.2 H0.3 Z" fill="#fff"/><path d="M1.2 4 H10.8 L10.1 13 A1 1 0 0 1 9.1 13.8 H2.9 A1 1 0 0 1 1.9 13 Z" fill="#fff"/>
<path d="M6 6 L3.8 8.4 H5.2 V11.2 H6.8 V8.4 H8.2 Z" fill="#f6c23e"/></svg></div><div class="ab" style="left:546px;top:46px;width:37px;background:#e74a3b"><svg class="abs" style="left:13px;top:6px" width="12" height="14" viewBox="0 0 12 14">
<path d="M0.3 1.6 H4 L4.6 0.4 H7.4 L8 1.6 H11.7 V3.2 H0.3 Z" fill="#fff"/><path d="M1.2 4 H10.8 L10.1 13 A1 1 0 0 1 9.1 13.8 H2.9 A1 1 0 0 1 1.9 13 Z" fill="#fff"/></svg></div><div class="abs" style="left:13px;top:96px;font-size:14px;line-height:16px;color:#e8e9ec;white-space:nowrap">测试</div><div class="abs" style="left:256px;top:96px;font-size:14px;line-height:16px;color:#e8e9ec;white-space:nowrap">1</div><div class="ab" style="left:372px;top:89px;width:40px;background:#1cc88a"><svg class="abs" style="left:13px;top:7px" width="14" height="11" viewBox="0 0 14 11"><path d="M0.2 5.5 C2.2 -0.6 11.8 -0.6 13.8 5.5 C11.8 11.6 2.2 11.6 0.2 5.5 Z" fill="#fff"/><circle cx="7" cy="5.5" r="3.1" fill="#1cc88a"/><circle cx="6.6" cy="5.1" r="1.7" fill="#fff"/></svg></div><div class="ab" style="left:416px;top:89px;width:40px;background:#36b9cc"><svg class="abs" style="left:13px;top:6px" width="15" height="14" viewBox="0 0 15 14">
<path d="M8 2.2 H2.2 A1 1 0 0 0 1.2 3.2 V11.8 A1 1 0 0 0 2.2 12.8 H10.8 A1 1 0 0 0 11.8 11.8 V7.5" fill="none" stroke="#fff" stroke-width="1.9"/>
<path d="M5 9.8 L5.4 7.4 L11.6 1.2 L13.8 3.4 L7.6 9.6 Z" fill="#fff"/></svg></div><div class="ab" style="left:460px;top:89px;width:41px;background:#1cc88a"><svg class="abs" style="left:13px;top:7px" width="16" height="12" viewBox="0 0 16 12">
<g fill="#fff"><circle cx="8" cy="2.8" r="2.6"/><circle cx="3" cy="3.6" r="1.7"/><circle cx="13" cy="3.6" r="1.7"/>
<path d="M3.8 11.5 V9.3 A2.8 2.8 0 0 1 6.6 6.5 H9.4 A2.8 2.8 0 0 1 12.2 9.3 V11.5 Z"/>
<path d="M0 10 V8.2 A1.8 1.8 0 0 1 1.8 6.4 H4 A3.5 3.5 0 0 0 3 8.8 V10 Z"/><path d="M16 10 V8.2 A1.8 1.8 0 0 0 14.2 6.4 H12 A3.5 3.5 0 0 1 13 8.8 V10 Z"/></g></svg></div><div class="ab" style="left:505px;top:89px;width:37px;background:#f6c23e"><svg class="abs" style="left:13px;top:6px" width="12" height="14" viewBox="0 0 12 14">
<path d="M0.3 1.6 H4 L4.6 0.4 H7.4 L8 1.6 H11.7 V3.2 H0.3 Z" fill="#fff"/><path d="M1.2 4 H10.8 L10.1 13 A1 1 0 0 1 9.1 13.8 H2.9 A1 1 0 0 1 1.9 13 Z" fill="#fff"/>
<path d="M6 6 L3.8 8.4 H5.2 V11.2 H6.8 V8.4 H8.2 Z" fill="#f6c23e"/></svg></div><div class="ab" style="left:546px;top:89px;width:37px;background:#e74a3b"><svg class="abs" style="left:13px;top:6px" width="12" height="14" viewBox="0 0 12 14">
<path d="M0.3 1.6 H4 L4.6 0.4 H7.4 L8 1.6 H11.7 V3.2 H0.3 Z" fill="#fff"/><path d="M1.2 4 H10.8 L10.1 13 A1 1 0 0 1 9.1 13.8 H2.9 A1 1 0 0 1 1.9 13 Z" fill="#fff"/></svg></div><div class="abs" style="left:13px;top:139px;font-size:14px;line-height:16px;color:#e8e9ec;white-space:nowrap">مزاد جديد علي الالل</div><div class="abs" style="left:256px;top:139px;font-size:14px;line-height:16px;color:#e8e9ec;white-space:nowrap">1</div><div class="ab" style="left:372px;top:132px;width:40px;background:#1cc88a"><svg class="abs" style="left:13px;top:7px" width="14" height="11" viewBox="0 0 14 11"><path d="M0.2 5.5 C2.2 -0.6 11.8 -0.6 13.8 5.5 C11.8 11.6 2.2 11.6 0.2 5.5 Z" fill="#fff"/><circle cx="7" cy="5.5" r="3.1" fill="#1cc88a"/><circle cx="6.6" cy="5.1" r="1.7" fill="#fff"/></svg></div><div class="ab" style="left:416px;top:132px;width:40px;background:#36b9cc"><svg class="abs" style="left:13px;top:6px" width="15" height="14" viewBox="0 0 15 14">
<path d="M8 2.2 H2.2 A1 1 0 0 0 1.2 3.2 V11.8 A1 1 0 0 0 2.2 12.8 H10.8 A1 1 0 0 0 11.8 11.8 V7.5" fill="none" stroke="#fff" stroke-width="1.9"/>
<path d="M5 9.8 L5.4 7.4 L11.6 1.2 L13.8 3.4 L7.6 9.6 Z" fill="#fff"/></svg></div><div class="ab" style="left:460px;top:132px;width:41px;background:#1cc88a"><svg class="abs" style="left:13px;top:7px" width="16" height="12" viewBox="0 0 16 12">
<g fill="#fff"><circle cx="8" cy="2.8" r="2.6"/><circle cx="3" cy="3.6" r="1.7"/><circle cx="13" cy="3.6" r="1.7"/>
<path d="M3.8 11.5 V9.3 A2.8 2.8 0 0 1 6.6 6.5 H9.4 A2.8 2.8 0 0 1 12.2 9.3 V11.5 Z"/>
<path d="M0 10 V8.2 A1.8 1.8 0 0 1 1.8 6.4 H4 A3.5 3.5 0 0 0 3 8.8 V10 Z"/><path d="M16 10 V8.2 A1.8 1.8 0 0 0 14.2 6.4 H12 A3.5 3.5 0 0 1 13 8.8 V10 Z"/></g></svg></div><div class="ab" style="left:505px;top:132px;width:37px;background:#f6c23e"><svg class="abs" style="left:13px;top:6px" width="12" height="14" viewBox="0 0 12 14">
<path d="M0.3 1.6 H4 L4.6 0.4 H7.4 L8 1.6 H11.7 V3.2 H0.3 Z" fill="#fff"/><path d="M1.2 4 H10.8 L10.1 13 A1 1 0 0 1 9.1 13.8 H2.9 A1 1 0 0 1 1.9 13 Z" fill="#fff"/>
<path d="M6 6 L3.8 8.4 H5.2 V11.2 H6.8 V8.4 H8.2 Z" fill="#f6c23e"/></svg></div><div class="ab" style="left:546px;top:132px;width:37px;background:#e74a3b"><svg class="abs" style="left:13px;top:6px" width="12" height="14" viewBox="0 0 12 14">
<path d="M0.3 1.6 H4 L4.6 0.4 H7.4 L8 1.6 H11.7 V3.2 H0.3 Z" fill="#fff"/><path d="M1.2 4 H10.8 L10.1 13 A1 1 0 0 1 9.1 13.8 H2.9 A1 1 0 0 1 1.9 13 Z" fill="#fff"/></svg></div><div class="abs" style="left:13px;top:182px;font-size:14px;line-height:16px;color:#e8e9ec;white-space:nowrap">标准</div><div class="abs" style="left:256px;top:182px;font-size:14px;line-height:16px;color:#e8e9ec;white-space:nowrap">1</div><div class="ab" style="left:372px;top:175px;width:40px;background:#1cc88a"><svg class="abs" style="left:13px;top:7px" width="14" height="11" viewBox="0 0 14 11"><path d="M0.2 5.5 C2.2 -0.6 11.8 -0.6 13.8 5.5 C11.8 11.6 2.2 11.6 0.2 5.5 Z" fill="#fff"/><circle cx="7" cy="5.5" r="3.1" fill="#1cc88a"/><circle cx="6.6" cy="5.1" r="1.7" fill="#fff"/></svg></div><div class="ab" style="left:416px;top:175px;width:40px;background:#36b9cc"><svg class="abs" style="left:13px;top:6px" width="15" height="14" viewBox="0 0 15 14">
<path d="M8 2.2 H2.2 A1 1 0 0 0 1.2 3.2 V11.8 A1 1 0 0 0 2.2 12.8 H10.8 A1 1 0 0 0 11.8 11.8 V7.5" fill="none" stroke="#fff" stroke-width="1.9"/>
<path d="M5 9.8 L5.4 7.4 L11.6 1.2 L13.8 3.4 L7.6 9.6 Z" fill="#fff"/></svg></div><div class="ab" style="left:460px;top:175px;width:41px;background:#1cc88a"><svg class="abs" style="left:13px;top:7px" width="16" height="12" viewBox="0 0 16 12">
<g fill="#fff"><circle cx="8" cy="2.8" r="2.6"/><circle cx="3" cy="3.6" r="1.7"/><circle cx="13" cy="3.6" r="1.7"/>
<path d="M3.8 11.5 V9.3 A2.8 2.8 0 0 1 6.6 6.5 H9.4 A2.8 2.8 0 0 1 12.2 9.3 V11.5 Z"/>
<path d="M0 10 V8.2 A1.8 1.8 0 0 1 1.8 6.4 H4 A3.5 3.5 0 0 0 3 8.8 V10 Z"/><path d="M16 10 V8.2 A1.8 1.8 0 0 0 14.2 6.4 H12 A3.5 3.5 0 0 1 13 8.8 V10 Z"/></g></svg></div><div class="ab" style="left:505px;top:175px;width:37px;background:#f6c23e"><svg class="abs" style="left:13px;top:6px" width="12" height="14" viewBox="0 0 12 14">
<path d="M0.3 1.6 H4 L4.6 0.4 H7.4 L8 1.6 H11.7 V3.2 H0.3 Z" fill="#fff"/><path d="M1.2 4 H10.8 L10.1 13 A1 1 0 0 1 9.1 13.8 H2.9 A1 1 0 0 1 1.9 13 Z" fill="#fff"/>
<path d="M6 6 L3.8 8.4 H5.2 V11.2 H6.8 V8.4 H8.2 Z" fill="#f6c23e"/></svg></div><div class="ab" style="left:546px;top:175px;width:37px;background:#e74a3b"><svg class="abs" style="left:13px;top:6px" width="12" height="14" viewBox="0 0 12 14">
<path d="M0.3 1.6 H4 L4.6 0.4 H7.4 L8 1.6 H11.7 V3.2 H0.3 Z" fill="#fff"/><path d="M1.2 4 H10.8 L10.1 13 A1 1 0 0 1 9.1 13.8 H2.9 A1 1 0 0 1 1.9 13 Z" fill="#fff"/></svg></div><div class="abs" style="left:13px;top:225px;font-size:14px;line-height:16px;color:#e8e9ec;white-space:nowrap">标准</div><div class="abs" style="left:256px;top:225px;font-size:14px;line-height:16px;color:#e8e9ec;white-space:nowrap">0</div><div class="ab" style="left:372px;top:218px;width:40px;background:#1cc88a"><svg class="abs" style="left:13px;top:7px" width="14" height="11" viewBox="0 0 14 11"><path d="M0.2 5.5 C2.2 -0.6 11.8 -0.6 13.8 5.5 C11.8 11.6 2.2 11.6 0.2 5.5 Z" fill="#fff"/><circle cx="7" cy="5.5" r="3.1" fill="#1cc88a"/><circle cx="6.6" cy="5.1" r="1.7" fill="#fff"/></svg></div><div class="ab" style="left:416px;top:218px;width:40px;background:#36b9cc"><svg class="abs" style="left:13px;top:6px" width="15" height="14" viewBox="0 0 15 14">
<path d="M8 2.2 H2.2 A1 1 0 0 0 1.2 3.2 V11.8 A1 1 0 0 0 2.2 12.8 H10.8 A1 1 0 0 0 11.8 11.8 V7.5" fill="none" stroke="#fff" stroke-width="1.9"/>
<path d="M5 9.8 L5.4 7.4 L11.6 1.2 L13.8 3.4 L7.6 9.6 Z" fill="#fff"/></svg></div><div class="ab" style="left:460px;top:218px;width:41px;background:#1cc88a"><svg class="abs" style="left:13px;top:7px" width="16" height="12" viewBox="0 0 16 12">
<g fill="#fff"><circle cx="8" cy="2.8" r="2.6"/><circle cx="3" cy="3.6" r="1.7"/><circle cx="13" cy="3.6" r="1.7"/>
<path d="M3.8 11.5 V9.3 A2.8 2.8 0 0 1 6.6 6.5 H9.4 A2.8 2.8 0 0 1 12.2 9.3 V11.5 Z"/>
<path d="M0 10 V8.2 A1.8 1.8 0 0 1 1.8 6.4 H4 A3.5 3.5 0 0 0 3 8.8 V10 Z"/><path d="M16 10 V8.2 A1.8 1.8 0 0 0 14.2 6.4 H12 A3.5 3.5 0 0 1 13 8.8 V10 Z"/></g></svg></div><div class="ab" style="left:505px;top:218px;width:37px;background:#f6c23e"><svg class="abs" style="left:13px;top:6px" width="12" height="14" viewBox="0 0 12 14">
<path d="M0.3 1.6 H4 L4.6 0.4 H7.4 L8 1.6 H11.7 V3.2 H0.3 Z" fill="#fff"/><path d="M1.2 4 H10.8 L10.1 13 A1 1 0 0 1 9.1 13.8 H2.9 A1 1 0 0 1 1.9 13 Z" fill="#fff"/>
<path d="M6 6 L3.8 8.4 H5.2 V11.2 H6.8 V8.4 H8.2 Z" fill="#f6c23e"/></svg></div><div class="ab" style="left:546px;top:218px;width:37px;background:#e74a3b"><svg class="abs" style="left:13px;top:6px" width="12" height="14" viewBox="0 0 12 14">
<path d="M0.3 1.6 H4 L4.6 0.4 H7.4 L8 1.6 H11.7 V3.2 H0.3 Z" fill="#fff"/><path d="M1.2 4 H10.8 L10.1 13 A1 1 0 0 1 9.1 13.8 H2.9 A1 1 0 0 1 1.9 13 Z" fill="#fff"/></svg></div><div class="abs" style="left:13px;top:268px;font-size:14px;line-height:16px;color:#e8e9ec;white-space:nowrap">雷鬼</div><div class="abs" style="left:256px;top:268px;font-size:14px;line-height:16px;color:#e8e9ec;white-space:nowrap">1</div><div class="ab" style="left:372px;top:261px;width:40px;background:#1cc88a"><svg class="abs" style="left:13px;top:7px" width="14" height="11" viewBox="0 0 14 11"><path d="M0.2 5.5 C2.2 -0.6 11.8 -0.6 13.8 5.5 C11.8 11.6 2.2 11.6 0.2 5.5 Z" fill="#fff"/><circle cx="7" cy="5.5" r="3.1" fill="#1cc88a"/><circle cx="6.6" cy="5.1" r="1.7" fill="#fff"/></svg></div><div class="ab" style="left:416px;top:261px;width:40px;background:#36b9cc"><svg class="abs" style="left:13px;top:6px" width="15" height="14" viewBox="0 0 15 14">
<path d="M8 2.2 H2.2 A1 1 0 0 0 1.2 3.2 V11.8 A1 1 0 0 0 2.2 12.8 H10.8 A1 1 0 0 0 11.8 11.8 V7.5" fill="none" stroke="#fff" stroke-width="1.9"/>
<path d="M5 9.8 L5.4 7.4 L11.6 1.2 L13.8 3.4 L7.6 9.6 Z" fill="#fff"/></svg></div><div class="ab" style="left:460px;top:261px;width:41px;background:#1cc88a"><svg class="abs" style="left:13px;top:7px" width="16" height="12" viewBox="0 0 16 12">
<g fill="#fff"><circle cx="8" cy="2.8" r="2.6"/><circle cx="3" cy="3.6" r="1.7"/><circle cx="13" cy="3.6" r="1.7"/>
<path d="M3.8 11.5 V9.3 A2.8 2.8 0 0 1 6.6 6.5 H9.4 A2.8 2.8 0 0 1 12.2 9.3 V11.5 Z"/>
<path d="M0 10 V8.2 A1.8 1.8 0 0 1 1.8 6.4 H4 A3.5 3.5 0 0 0 3 8.8 V10 Z"/><path d="M16 10 V8.2 A1.8 1.8 0 0 0 14.2 6.4 H12 A3.5 3.5 0 0 1 13 8.8 V10 Z"/></g></svg></div><div class="ab" style="left:505px;top:261px;width:37px;background:#f6c23e"><svg class="abs" style="left:13px;top:6px" width="12" height="14" viewBox="0 0 12 14">
<path d="M0.3 1.6 H4 L4.6 0.4 H7.4 L8 1.6 H11.7 V3.2 H0.3 Z" fill="#fff"/><path d="M1.2 4 H10.8 L10.1 13 A1 1 0 0 1 9.1 13.8 H2.9 A1 1 0 0 1 1.9 13 Z" fill="#fff"/>
<path d="M6 6 L3.8 8.4 H5.2 V11.2 H6.8 V8.4 H8.2 Z" fill="#f6c23e"/></svg></div><div class="ab" style="left:546px;top:261px;width:37px;background:#e74a3b"><svg class="abs" style="left:13px;top:6px" width="12" height="14" viewBox="0 0 12 14">
<path d="M0.3 1.6 H4 L4.6 0.4 H7.4 L8 1.6 H11.7 V3.2 H0.3 Z" fill="#fff"/><path d="M1.2 4 H10.8 L10.1 13 A1 1 0 0 1 9.1 13.8 H2.9 A1 1 0 0 1 1.9 13 Z" fill="#fff"/></svg></div><div class="abs" style="left:13px;top:311px;font-size:14px;line-height:16px;color:#e8e9ec;white-space:nowrap">伊拉拉</div><div class="abs" style="left:256px;top:311px;font-size:14px;line-height:16px;color:#e8e9ec;white-space:nowrap">1</div><div class="ab" style="left:372px;top:304px;width:40px;background:#1cc88a"><svg class="abs" style="left:13px;top:7px" width="14" height="11" viewBox="0 0 14 11"><path d="M0.2 5.5 C2.2 -0.6 11.8 -0.6 13.8 5.5 C11.8 11.6 2.2 11.6 0.2 5.5 Z" fill="#fff"/><circle cx="7" cy="5.5" r="3.1" fill="#1cc88a"/><circle cx="6.6" cy="5.1" r="1.7" fill="#fff"/></svg></div><div class="ab" style="left:416px;top:304px;width:40px;background:#36b9cc"><svg class="abs" style="left:13px;top:6px" width="15" height="14" viewBox="0 0 15 14">
<path d="M8 2.2 H2.2 A1 1 0 0 0 1.2 3.2 V11.8 A1 1 0 0 0 2.2 12.8 H10.8 A1 1 0 0 0 11.8 11.8 V7.5" fill="none" stroke="#fff" stroke-width="1.9"/>
<path d="M5 9.8 L5.4 7.4 L11.6 1.2 L13.8 3.4 L7.6 9.6 Z" fill="#fff"/></svg></div><div class="ab" style="left:460px;top:304px;width:41px;background:#1cc88a"><svg class="abs" style="left:13px;top:7px" width="16" height="12" viewBox="0 0 16 12">
<g fill="#fff"><circle cx="8" cy="2.8" r="2.6"/><circle cx="3" cy="3.6" r="1.7"/><circle cx="13" cy="3.6" r="1.7"/>
<path d="M3.8 11.5 V9.3 A2.8 2.8 0 0 1 6.6 6.5 H9.4 A2.8 2.8 0 0 1 12.2 9.3 V11.5 Z"/>
<path d="M0 10 V8.2 A1.8 1.8 0 0 1 1.8 6.4 H4 A3.5 3.5 0 0 0 3 8.8 V10 Z"/><path d="M16 10 V8.2 A1.8 1.8 0 0 0 14.2 6.4 H12 A3.5 3.5 0 0 1 13 8.8 V10 Z"/></g></svg></div><div class="ab" style="left:505px;top:304px;width:37px;background:#f6c23e"><svg class="abs" style="left:13px;top:6px" width="12" height="14" viewBox="0 0 12 14">
<path d="M0.3 1.6 H4 L4.6 0.4 H7.4 L8 1.6 H11.7 V3.2 H0.3 Z" fill="#fff"/><path d="M1.2 4 H10.8 L10.1 13 A1 1 0 0 1 9.1 13.8 H2.9 A1 1 0 0 1 1.9 13 Z" fill="#fff"/>
<path d="M6 6 L3.8 8.4 H5.2 V11.2 H6.8 V8.4 H8.2 Z" fill="#f6c23e"/></svg></div><div class="ab" style="left:546px;top:304px;width:37px;background:#e74a3b"><svg class="abs" style="left:13px;top:6px" width="12" height="14" viewBox="0 0 12 14">
<path d="M0.3 1.6 H4 L4.6 0.4 H7.4 L8 1.6 H11.7 V3.2 H0.3 Z" fill="#fff"/><path d="M1.2 4 H10.8 L10.1 13 A1 1 0 0 1 9.1 13.8 H2.9 A1 1 0 0 1 1.9 13 Z" fill="#fff"/></svg></div><div class="abs" style="left:13px;top:354px;font-size:14px;line-height:16px;color:#e8e9ec;white-space:nowrap">UA</div><div class="abs" style="left:256px;top:354px;font-size:14px;line-height:16px;color:#e8e9ec;white-space:nowrap">1</div><div class="ab" style="left:372px;top:347px;width:40px;background:#1cc88a"><svg class="abs" style="left:13px;top:7px" width="14" height="11" viewBox="0 0 14 11"><path d="M0.2 5.5 C2.2 -0.6 11.8 -0.6 13.8 5.5 C11.8 11.6 2.2 11.6 0.2 5.5 Z" fill="#fff"/><circle cx="7" cy="5.5" r="3.1" fill="#1cc88a"/><circle cx="6.6" cy="5.1" r="1.7" fill="#fff"/></svg></div><div class="ab" style="left:416px;top:347px;width:40px;background:#36b9cc"><svg class="abs" style="left:13px;top:6px" width="15" height="14" viewBox="0 0 15 14">
<path d="M8 2.2 H2.2 A1 1 0 0 0 1.2 3.2 V11.8 A1 1 0 0 0 2.2 12.8 H10.8 A1 1 0 0 0 11.8 11.8 V7.5" fill="none" stroke="#fff" stroke-width="1.9"/>
<path d="M5 9.8 L5.4 7.4 L11.6 1.2 L13.8 3.4 L7.6 9.6 Z" fill="#fff"/></svg></div><div class="ab" style="left:460px;top:347px;width:41px;background:#1cc88a"><svg class="abs" style="left:13px;top:7px" width="16" height="12" viewBox="0 0 16 12">
<g fill="#fff"><circle cx="8" cy="2.8" r="2.6"/><circle cx="3" cy="3.6" r="1.7"/><circle cx="13" cy="3.6" r="1.7"/>
<path d="M3.8 11.5 V9.3 A2.8 2.8 0 0 1 6.6 6.5 H9.4 A2.8 2.8 0 0 1 12.2 9.3 V11.5 Z"/>
<path d="M0 10 V8.2 A1.8 1.8 0 0 1 1.8 6.4 H4 A3.5 3.5 0 0 0 3 8.8 V10 Z"/><path d="M16 10 V8.2 A1.8 1.8 0 0 0 14.2 6.4 H12 A3.5 3.5 0 0 1 13 8.8 V10 Z"/></g></svg></div><div class="ab" style="left:505px;top:347px;width:37px;background:#f6c23e"><svg class="abs" style="left:13px;top:6px" width="12" height="14" viewBox="0 0 12 14">
<path d="M0.3 1.6 H4 L4.6 0.4 H7.4 L8 1.6 H11.7 V3.2 H0.3 Z" fill="#fff"/><path d="M1.2 4 H10.8 L10.1 13 A1 1 0 0 1 9.1 13.8 H2.9 A1 1 0 0 1 1.9 13 Z" fill="#fff"/>
<path d="M6 6 L3.8 8.4 H5.2 V11.2 H6.8 V8.4 H8.2 Z" fill="#f6c23e"/></svg></div><div class="ab" style="left:546px;top:347px;width:37px;background:#e74a3b"><svg class="abs" style="left:13px;top:6px" width="12" height="14" viewBox="0 0 12 14">
<path d="M0.3 1.6 H4 L4.6 0.4 H7.4 L8 1.6 H11.7 V3.2 H0.3 Z" fill="#fff"/><path d="M1.2 4 H10.8 L10.1 13 A1 1 0 0 1 9.1 13.8 H2.9 A1 1 0 0 1 1.9 13 Z" fill="#fff"/></svg></div><div class="abs" style="left:13px;top:397px;font-size:14px;line-height:16px;color:#e8e9ec;white-space:nowrap">干草</div><div class="abs" style="left:256px;top:397px;font-size:14px;line-height:16px;color:#e8e9ec;white-space:nowrap">1</div><div class="ab" style="left:372px;top:390px;width:40px;background:#1cc88a"><svg class="abs" style="left:13px;top:7px" width="14" height="11" viewBox="0 0 14 11"><path d="M0.2 5.5 C2.2 -0.6 11.8 -0.6 13.8 5.5 C11.8 11.6 2.2 11.6 0.2 5.5 Z" fill="#fff"/><circle cx="7" cy="5.5" r="3.1" fill="#1cc88a"/><circle cx="6.6" cy="5.1" r="1.7" fill="#fff"/></svg></div><div class="ab" style="left:416px;top:390px;width:40px;background:#36b9cc"><svg class="abs" style="left:13px;top:6px" width="15" height="14" viewBox="0 0 15 14">
<path d="M8 2.2 H2.2 A1 1 0 0 0 1.2 3.2 V11.8 A1 1 0 0 0 2.2 12.8 H10.8 A1 1 0 0 0 11.8 11.8 V7.5" fill="none" stroke="#fff" stroke-width="1.9"/>
<path d="M5 9.8 L5.4 7.4 L11.6 1.2 L13.8 3.4 L7.6 9.6 Z" fill="#fff"/></svg></div><div class="ab" style="left:460px;top:390px;width:41px;background:#1cc88a"><svg class="abs" style="left:13px;top:7px" width="16" height="12" viewBox="0 0 16 12">
<g fill="#fff"><circle cx="8" cy="2.8" r="2.6"/><circle cx="3" cy="3.6" r="1.7"/><circle cx="13" cy="3.6" r="1.7"/>
<path d="M3.8 11.5 V9.3 A2.8 2.8 0 0 1 6.6 6.5 H9.4 A2.8 2.8 0 0 1 12.2 9.3 V11.5 Z"/>
<path d="M0 10 V8.2 A1.8 1.8 0 0 1 1.8 6.4 H4 A3.5 3.5 0 0 0 3 8.8 V10 Z"/><path d="M16 10 V8.2 A1.8 1.8 0 0 0 14.2 6.4 H12 A3.5 3.5 0 0 1 13 8.8 V10 Z"/></g></svg></div><div class="ab" style="left:505px;top:390px;width:37px;background:#f6c23e"><svg class="abs" style="left:13px;top:6px" width="12" height="14" viewBox="0 0 12 14">
<path d="M0.3 1.6 H4 L4.6 0.4 H7.4 L8 1.6 H11.7 V3.2 H0.3 Z" fill="#fff"/><path d="M1.2 4 H10.8 L10.1 13 A1 1 0 0 1 9.1 13.8 H2.9 A1 1 0 0 1 1.9 13 Z" fill="#fff"/>
<path d="M6 6 L3.8 8.4 H5.2 V11.2 H6.8 V8.4 H8.2 Z" fill="#f6c23e"/></svg></div><div class="ab" style="left:546px;top:390px;width:37px;background:#e74a3b"><svg class="abs" style="left:13px;top:6px" width="12" height="14" viewBox="0 0 12 14">
<path d="M0.3 1.6 H4 L4.6 0.4 H7.4 L8 1.6 H11.7 V3.2 H0.3 Z" fill="#fff"/><path d="M1.2 4 H10.8 L10.1 13 A1 1 0 0 1 9.1 13.8 H2.9 A1 1 0 0 1 1.9 13 Z" fill="#fff"/></svg></div><div class="abs" style="left:13px;top:440px;font-size:14px;line-height:16px;color:#e8e9ec;white-space:nowrap">脸书</div><div class="abs" style="left:256px;top:440px;font-size:14px;line-height:16px;color:#e8e9ec;white-space:nowrap">1</div><div class="ab" style="left:372px;top:433px;width:40px;background:#1cc88a"><svg class="abs" style="left:13px;top:7px" width="14" height="11" viewBox="0 0 14 11"><path d="M0.2 5.5 C2.2 -0.6 11.8 -0.6 13.8 5.5 C11.8 11.6 2.2 11.6 0.2 5.5 Z" fill="#fff"/><circle cx="7" cy="5.5" r="3.1" fill="#1cc88a"/><circle cx="6.6" cy="5.1" r="1.7" fill="#fff"/></svg></div><div class="ab" style="left:416px;top:433px;width:40px;background:#36b9cc"><svg class="abs" style="left:13px;top:6px" width="15" height="14" viewBox="0 0 15 14">
<path d="M8 2.2 H2.2 A1 1 0 0 0 1.2 3.2 V11.8 A1 1 0 0 0 2.2 12.8 H10.8 A1 1 0 0 0 11.8 11.8 V7.5" fill="none" stroke="#fff" stroke-width="1.9"/>
<path d="M5 9.8 L5.4 7.4 L11.6 1.2 L13.8 3.4 L7.6 9.6 Z" fill="#fff"/></svg></div><div class="ab" style="left:460px;top:433px;width:41px;background:#1cc88a"><svg class="abs" style="left:13px;top:7px" width="16" height="12" viewBox="0 0 16 12">
<g fill="#fff"><circle cx="8" cy="2.8" r="2.6"/><circle cx="3" cy="3.6" r="1.7"/><circle cx="13" cy="3.6" r="1.7"/>
<path d="M3.8 11.5 V9.3 A2.8 2.8 0 0 1 6.6 6.5 H9.4 A2.8 2.8 0 0 1 12.2 9.3 V11.5 Z"/>
<path d="M0 10 V8.2 A1.8 1.8 0 0 1 1.8 6.4 H4 A3.5 3.5 0 0 0 3 8.8 V10 Z"/><path d="M16 10 V8.2 A1.8 1.8 0 0 0 14.2 6.4 H12 A3.5 3.5 0 0 1 13 8.8 V10 Z"/></g></svg></div><div class="ab" style="left:505px;top:433px;width:37px;background:#f6c23e"><svg class="abs" style="left:13px;top:6px" width="12" height="14" viewBox="0 0 12 14">
<path d="M0.3 1.6 H4 L4.6 0.4 H7.4 L8 1.6 H11.7 V3.2 H0.3 Z" fill="#fff"/><path d="M1.2 4 H10.8 L10.1 13 A1 1 0 0 1 9.1 13.8 H2.9 A1 1 0 0 1 1.9 13 Z" fill="#fff"/>
<path d="M6 6 L3.8 8.4 H5.2 V11.2 H6.8 V8.4 H8.2 Z" fill="#f6c23e"/></svg></div><div class="ab" style="left:546px;top:433px;width:37px;background:#e74a3b"><svg class="abs" style="left:13px;top:6px" width="12" height="14" viewBox="0 0 12 14">
<path d="M0.3 1.6 H4 L4.6 0.4 H7.4 L8 1.6 H11.7 V3.2 H0.3 Z" fill="#fff"/><path d="M1.2 4 H10.8 L10.1 13 A1 1 0 0 1 9.1 13.8 H2.9 A1 1 0 0 1 1.9 13 Z" fill="#fff"/></svg></div></div>
</body></html>
